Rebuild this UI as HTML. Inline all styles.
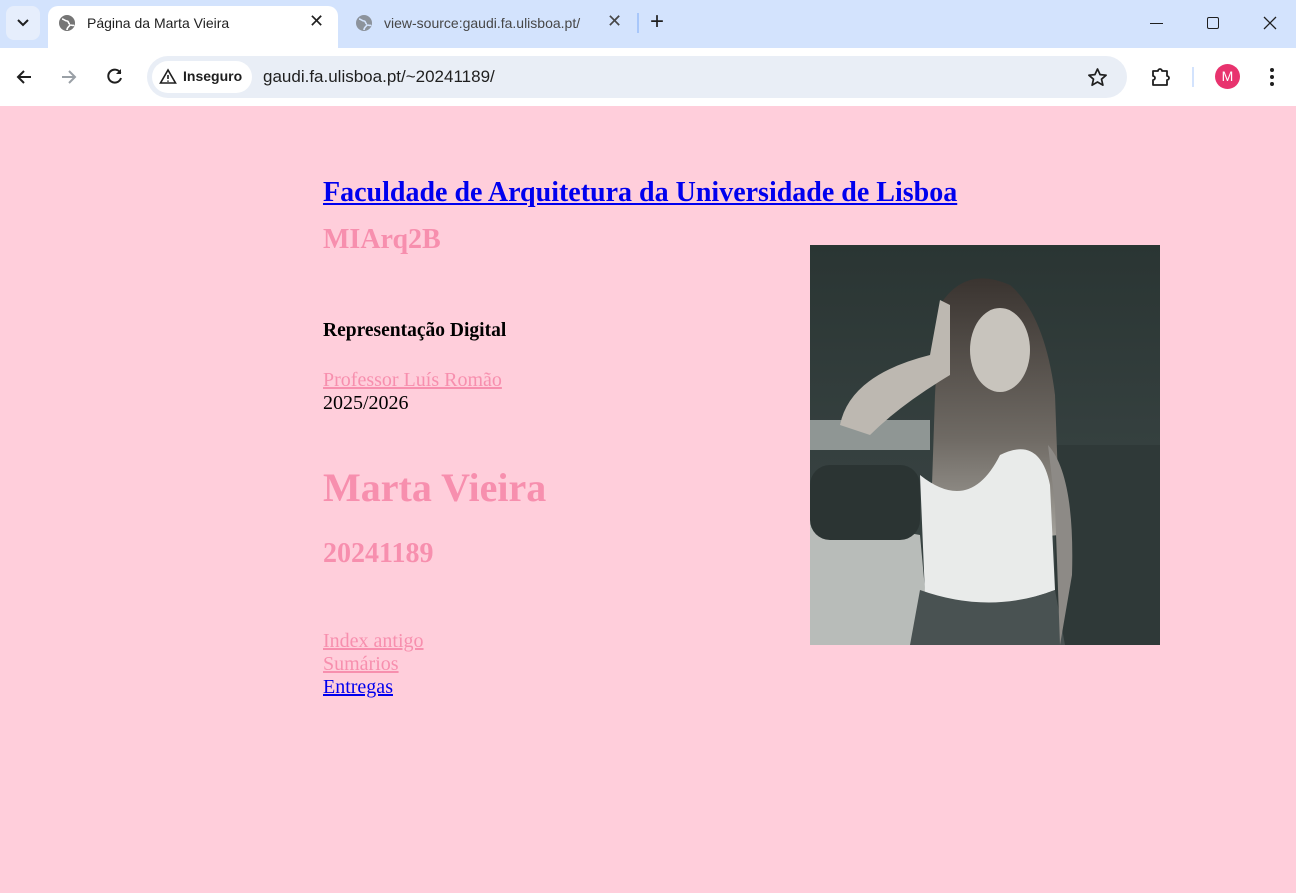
<!DOCTYPE html>
<html><head><meta charset="utf-8"><style>
*{margin:0;padding:0;box-sizing:border-box}
body{width:1296px;height:893px;overflow:hidden;background:#ffcedb;font-family:"Liberation Serif",serif;position:relative}
.top{position:absolute;left:0;top:0;width:1296px;height:48px;background:#d3e3fd}
.bar{position:absolute;left:0;top:48px;width:1296px;height:58px;background:#fff}
.tab{position:absolute;left:48px;top:6px;width:290px;height:42px;background:#fff;border-radius:10px 10px 0 0}
.ui{font-family:"Liberation Sans",sans-serif;position:absolute;color:#1f1f1f}
.omni{position:absolute;left:147px;top:56px;width:980px;height:42px;background:#e9eef6;border-radius:21px}
.chip{position:absolute;left:152px;top:61px;width:100px;height:32px;background:#fff;border-radius:16px}
.t{position:absolute;left:323px;white-space:nowrap}
.pink{color:#f78fae}
a{color:inherit}
</style></head><body>
<div class="top"></div>
<div style="position:absolute;left:6px;top:6px;width:34px;height:34px;background:#e6eefc;border-radius:8px"></div>
<svg style="position:absolute;left:15px;top:16px" width="16" height="14"><path d="M3 4l5 5 5-5" stroke="#1f1f1f" stroke-width="2" fill="none"/></svg>
<div class="tab"></div>
<svg style="position:absolute;left:58px;top:14px" width="18" height="18"><circle cx="9" cy="9" r="8" fill="#757575"/><path d="M4 5c2 0 3 2 5 2s1 3 3 3M9 16c0-3 2-3 3-5 2 0 3 1 4 0" stroke="#fff" stroke-width="1.6" fill="none"/></svg>
<div class="ui" style="left:87px;top:15px;font-size:14px">Página da Marta Vieira</div>
<div class="ui" style="left:309px;top:11px;font-size:18px">✕</div>
<svg style="position:absolute;left:355px;top:14px" width="18" height="18"><circle cx="9" cy="9" r="8" fill="#8c939c"/><path d="M4 5c2 0 3 2 5 2s1 3 3 3M9 16c0-3 2-3 3-5 2 0 3 1 4 0" stroke="#d3e3fd" stroke-width="1.6" fill="none"/></svg>
<div class="ui" style="left:384px;top:15px;font-size:14px;color:#474747">view-source:gaudi.fa.ulisboa.pt/</div>
<div class="ui" style="left:607px;top:11px;font-size:18px;color:#474747">✕</div>
<div style="position:absolute;left:637px;top:13px;width:2px;height:20px;background:#a8c7fa"></div>
<div class="ui" style="left:650px;top:8px;font-size:24px">+</div>
<div style="position:absolute;left:1150px;top:23px;width:13px;height:1px;background:#1f1f1f"></div>
<div style="position:absolute;left:1207px;top:17px;width:12px;height:12px;border:1.3px solid #1f1f1f;border-radius:2px"></div>
<svg style="position:absolute;left:1263px;top:16px" width="14" height="14"><path d="M1 1l12 12M13 1L1 13" stroke="#1f1f1f" stroke-width="1.3"/></svg>
<div class="bar"></div>
<svg style="position:absolute;left:14px;top:67px" width="20" height="20"><path d="M17 10H4M10 4l-6 6 6 6" stroke="#1f1f1f" stroke-width="2" fill="none"/></svg>
<svg style="position:absolute;left:59px;top:67px" width="20" height="20"><path d="M3 10h13M10 4l6 6-6 6" stroke="#9aa0a6" stroke-width="2" fill="none"/></svg>
<svg style="position:absolute;left:105px;top:66px" width="20" height="20"><path d="M15.5 7A6.5 6.5 0 1 0 16 12" stroke="#1f1f1f" stroke-width="2" fill="none"/><path d="M16 3v5h-5z" fill="#1f1f1f"/></svg>
<div class="omni"></div><div class="chip"></div>
<svg style="position:absolute;left:159px;top:68px" width="18" height="17"><path d="M9 2L1.5 15h15z" stroke="#1f1f1f" stroke-width="1.6" fill="none"/><path d="M9 7v4M9 12.5v1.3" stroke="#1f1f1f" stroke-width="1.6"/></svg>
<div class="ui" style="left:183px;top:68px;font-size:14px;font-weight:bold">Inseguro</div>
<div class="ui" style="left:263px;top:67px;font-size:17px">gaudi.fa.ulisboa.pt/~20241189/</div>
<svg style="position:absolute;left:1087px;top:67px" width="21" height="21"><path d="M10.5 2l2.6 5.6 6 .6-4.6 4 1.4 6-5.4-3.2-5.4 3.2 1.4-6-4.6-4 6-.6z" stroke="#1f1f1f" stroke-width="1.7" fill="none" stroke-linejoin="round"/></svg>
<svg style="position:absolute;left:1149px;top:65px" width="24" height="24"><path d="M4 6h5a2 2 0 0 1 4 0h5v5a2 2 0 0 1 0 4v5H4v-5a2 2 0 0 0 0-4z" stroke="#1f1f1f" stroke-width="1.8" fill="none" stroke-linejoin="round"/></svg>
<div style="position:absolute;left:1192px;top:67px;width:2px;height:20px;background:#d3e3fd"></div>
<div style="position:absolute;left:1215px;top:64px;width:25px;height:25px;border-radius:50%;background:#e8336e;color:#fff;font-family:'Liberation Sans',sans-serif;font-size:14px;text-align:center;line-height:25px">M</div>
<svg style="position:absolute;left:1268px;top:66px" width="8" height="22"><circle cx="4" cy="4" r="2" fill="#1f1f1f"/><circle cx="4" cy="11" r="2" fill="#1f1f1f"/><circle cx="4" cy="18" r="2" fill="#1f1f1f"/></svg>

<div class="t" style="top:176px;font-size:28px;font-weight:bold;line-height:34px"><a href="#" style="color:#0000ee">Faculdade de Arquitetura da Universidade de Lisboa</a></div>
<div class="t pink" style="top:223px;font-size:28px;font-weight:bold;line-height:34px">MIArq2B</div>
<div class="t" style="top:319px;font-size:19.5px;font-weight:bold;line-height:23px">Representação Digital</div>
<div class="t pink" style="top:369px;font-size:20px;line-height:23px"><a href="#">Professor Luís Romão</a></div>
<div class="t" style="top:392px;font-size:20px;line-height:23px">2025/2026</div>
<div class="t pink" style="top:465px;font-size:40px;font-weight:bold;line-height:46px">Marta Vieira</div>
<div class="t pink" style="top:537px;font-size:28px;font-weight:bold;line-height:34px">20241189</div>
<div class="t pink" style="top:630px;font-size:20px;line-height:23px"><a href="#">Index antigo</a></div>
<div class="t pink" style="top:653px;font-size:20px;line-height:23px"><a href="#">Sumários</a></div>
<div class="t" style="top:676px;font-size:20px;line-height:23px"><a href="#" style="color:#0000ee">Entregas</a></div>

<svg style="position:absolute;left:810px;top:245px" width="350" height="400" viewBox="0 0 350 400">
<defs><linearGradient id="g" x1="0" y1="0" x2="0" y2="1"><stop offset="0" stop-color="#2a3533"/><stop offset=".5" stop-color="#35403f"/><stop offset="1" stop-color="#3a4443"/></linearGradient>
<linearGradient id="h" x1="0" y1="0" x2="0" y2="1"><stop offset="0" stop-color="#3a3430"/><stop offset=".6" stop-color="#6f6a64"/><stop offset="1" stop-color="#a8a6a0"/></linearGradient></defs>
<rect width="350" height="400" fill="url(#g)"/>
<rect x="0" y="175" width="120" height="30" fill="#8f9694"/>
<path d="M0 270 L110 290 L120 400 L0 400z" fill="#b8bcb9"/>
<rect x="0" y="220" width="110" height="75" rx="20" fill="#2b3433"/>
<rect x="245" y="200" width="105" height="200" fill="#2f3938"/>
<path d="M130 60 Q155 20 200 40 Q235 70 245 150 L250 290 L120 300 L125 150z" fill="url(#h)"/>
<ellipse cx="190" cy="105" rx="30" ry="42" fill="#c8c4bd"/>
<path d="M30 180 Q40 130 120 110 L130 55 L140 60 L140 130 Q90 160 60 190z" fill="#bdb8b1"/>
<path d="M110 230 Q160 270 190 210 Q230 190 240 240 L245 345 Q180 370 115 350z" fill="#e9ebea"/>
<path d="M110 345 Q180 370 245 345 L255 400 L100 400z" fill="#495252"/>
<path d="M238 200 Q265 230 262 330 L250 400 L245 260z" fill="#8d8a86"/>
</svg>
</body></html>
